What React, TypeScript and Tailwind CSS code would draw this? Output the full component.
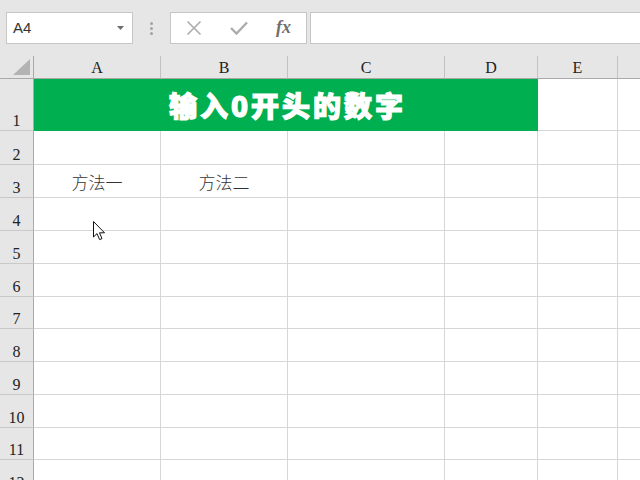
import React from "react";

const rows = [
  { n: "2", h: "h-[34px]" },
  { n: "3", h: "h-[33px]" },
  { n: "4", h: "h-[33px]" },
  { n: "5", h: "h-[33px]" },
  { n: "6", h: "h-[33px]" },
  { n: "7", h: "h-[32px]" },
  { n: "8", h: "h-[33px]" },
  { n: "9", h: "h-[33px]" },
  { n: "10", h: "h-[33px]" },
  { n: "11", h: "h-[32px]" },
  { n: "12", h: "h-[33px]" },
];

const cols = ["A", "B", "C", "D", "E", ""];

const serif = { fontFamily: '"Liberation Serif", "DejaVu Serif", serif' };

function RowHead({ n, h }: { n: string; h: string }) {
  return (
    <div
      className={`${h} bg-[#e6e6e6] border-r border-b border-r-[#a9a9a9] border-b-[#c9c9c9] flex items-end justify-center pb-[1px] text-[16px] leading-none text-[#222]`}
      style={serif}
    >
      {n}
    </div>
  );
}

function Cell({ h, children }: { h: string; children?: React.ReactNode }) {
  return (
    <div
      className={`${h} bg-white border-r border-b border-[#d6d6d6] flex items-center justify-center pt-[2px] text-[17px] font-light text-[#333]`}
      style={{ fontFamily: '"Noto Sans CJK SC", sans-serif' }}
    >
      {children}
    </div>
  );
}

export default function App() {
  return (
    <div className="w-[640px] h-[480px] overflow-hidden bg-[#e6e6e6] relative">
      {/* toolbar */}
      <div className="h-[56px] flex items-start pt-[12px] pl-[6px]">
        <div
          className="w-[127px] h-[32px] bg-white border border-[#c6c6c6] flex items-center pl-[6px] pr-[8px] text-[15px] text-[#333]"
          style={{ fontFamily: '"Liberation Sans", Arial, sans-serif' }}
        >
          <span className="flex-1">A4</span>
          <svg width="7" height="4" viewBox="0 0 7 4">
            <path d="M0 0 L7 0 L3.5 4 Z" fill="#6d6d6d" />
          </svg>
        </div>
        <div className="w-[37px] h-[32px] flex flex-col items-center justify-center gap-[2px]">
          <div className="w-[3px] h-[3px] rounded-full bg-[#a3a3a3]" />
          <div className="w-[3px] h-[3px] rounded-full bg-[#a3a3a3]" />
          <div className="w-[3px] h-[3px] rounded-full bg-[#a3a3a3]" />
        </div>
        <div className="w-[137px] h-[32px] bg-white border border-[#c6c6c6] flex items-center">
          <div className="w-[45px] flex justify-center pl-[1px]">
            <svg width="16" height="16" viewBox="0 0 16 16">
              <path d="M1.5 1.5 L14.5 14.5 M14.5 1.5 L1.5 14.5" stroke="#acacac" strokeWidth="1.6" fill="none" />
            </svg>
          </div>
          <div className="w-[45px] flex justify-center">
            <svg width="18" height="14" viewBox="0 0 18 14">
              <path d="M1 7 L6.5 12.5 L17 1.5" stroke="#acacac" strokeWidth="2.4" fill="none" />
            </svg>
          </div>
          <div
            className="w-[45px] flex justify-center italic text-[18px] text-[#6f6f6f] font-bold leading-none pb-[2px]"
            style={serif}
          >
            fx
          </div>
        </div>
        <div className="ml-[3px] flex-1 h-[32px] bg-white border-y border-l border-[#c6c6c6]" />
      </div>

      {/* grid */}
      <div className="grid grid-cols-[34px_127px_127px_157px_93px_80px_80px]">
        {/* column header */}
        <div className="h-[23px] bg-[#e6e6e6] border-r border-b border-r-[#a9a9a9] border-b-[#a9a9a9] flex items-end justify-end pr-[3px] pb-[3px]">
          <svg width="17" height="16" viewBox="0 0 17 16">
            <path d="M17 0 L17 16 L0 16 Z" fill="#b3b3b3" />
          </svg>
        </div>
        {cols.map((c, i) => (
          <div
            key={i}
            className="h-[23px] bg-[#e6e6e6] border-r border-b border-r-[#c2c2c2] border-b-[#a9a9a9] flex items-center justify-center text-[16px] leading-none text-[#222] pt-[2px]"
            style={serif}
          >
            {c}
          </div>
        ))}

        {/* row 1 */}
        <RowHead n="1" h="h-[52px]" />
        <div
          className="col-span-4 h-[52px] bg-[#00b050] flex items-center justify-center text-white text-[28px] font-black tracking-[3px] leading-none pl-[3px] [-webkit-text-stroke:1.2px_white]"
          style={{ fontFamily: '"Noto Sans CJK SC", sans-serif' }}
        >
          输入0开头的数字
        </div>
        <Cell h="h-[52px]" />
        <Cell h="h-[52px]" />

        {rows.map((r) => (
          <React.Fragment key={r.n}>
            <RowHead n={r.n} h={r.h} />
            <Cell h={r.h}>{r.n === "3" ? "方法一" : null}</Cell>
            <Cell h={r.h}>{r.n === "3" ? "方法二" : null}</Cell>
            <Cell h={r.h} />
            <Cell h={r.h} />
            <Cell h={r.h} />
            <Cell h={r.h} />
          </React.Fragment>
        ))}
      </div>

      {/* mouse cursor */}
      <svg
        className="absolute left-[93px] top-[221px]"
        width="13"
        height="20"
        viewBox="0 0 13 20"
      >
        <path
          d="M0.5 0.5 L0.5 16 L4 12.6 L6.6 18.6 L9 17.6 L6.5 11.8 L11.5 11.8 Z"
          fill="white"
          stroke="#111"
          strokeWidth="1"
          strokeLinejoin="miter"
        />
      </svg>
    </div>
  );
}
